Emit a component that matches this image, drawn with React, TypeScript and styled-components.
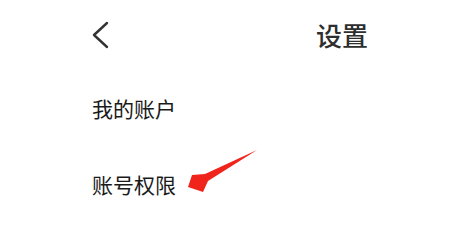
import React from "react";
import styled, { createGlobalStyle } from "styled-components";

const Global = createGlobalStyle`
  html, body { margin: 0; padding: 0; background: #ffffff; }
  body { font-family: "Noto Sans CJK SC", "Noto Sans", sans-serif; }
`;

const Page = styled.div`
  position: relative;
  width: 453px;
  height: 236px;
  box-sizing: border-box;
  padding: 0 85px 0 92px;
  background: #ffffff;
  overflow: hidden;
`;

const Header = styled.div`
  height: 70px;
  display: flex;
  align-items: center;
  justify-content: space-between;
`;

const BackButton = styled.div`
  width: 18px;
  height: 28px;
  display: flex;
  align-items: center;
`;

const Title = styled.div`
  font-size: 26px;
  font-weight: 500;
  color: #2e2e2e;
  line-height: 1;
`;

const List = styled.div`
  display: flex;
  flex-direction: column;
`;

const Row = styled.div`
  height: 76px;
  display: flex;
  align-items: center;
  font-size: 21px;
  color: #1a1a1a;
  line-height: 1;
`;

const ArrowMark = styled.svg`
  position: absolute;
  left: 0;
  top: 0;
  pointer-events: none;
`;

export default function App() {
  return (
    <>
      <Global />
      <Page>
        <Header>
          <BackButton>
            <svg width="18" height="28" viewBox="0 0 18 28">
              <polyline
                points="15,2 2,14 15,26"
                fill="none"
                stroke="#333333"
                strokeWidth="2.4"
                strokeLinecap="round"
                strokeLinejoin="round"
              />
            </svg>
          </BackButton>
          <Title>设置</Title>
        </Header>
        <List>
          <Row>我的账户</Row>
          <Row>账号权限</Row>
        </List>
        <ArrowMark width="453" height="236" viewBox="0 0 453 236">
          <polygon
            points="257,150 205,174 192,175 188,187 203,192 208,181"
            fill="#f0241b"
          />
        </ArrowMark>
      </Page>
    </>
  );
}
